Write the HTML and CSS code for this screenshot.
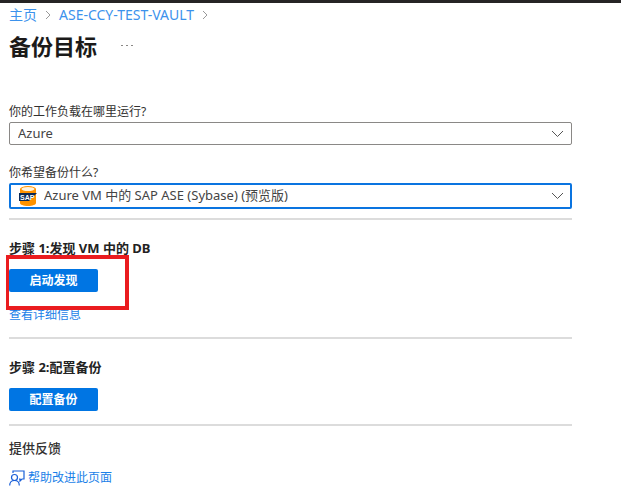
FILE: index.html
```
<!DOCTYPE html>
<html lang="zh-CN">
<head>
	<meta charset="UTF-8">
	<title>备份目标</title>
	<link rel="stylesheet" href="styles.css">
</head>
<body>
	<div class="topbar"></div>
	<div class="page">
		<nav class="crumbs">
			<a href="#">主页</a>
			<svg class="sep" viewBox="0 0 6 10"><path d="M1 1l4 4-4 4"/></svg>
			<a href="#">ASE-CCY-TEST-VAULT</a>
			<svg class="sep" viewBox="0 0 6 10"><path d="M1 1l4 4-4 4"/></svg>
		</nav>
		<header class="head">
			<h1>备份目标</h1>
			<button class="more" type="button" aria-label="更多">
				<svg viewBox="0 0 12 2"><path d="M0 0h2v1H0zM5 0h2v1H5zM10 0h2v1h-2z"/></svg>
			</button>
		</header>

		<div class="field">
			<label for="where">你的工作负载在哪里运行?</label>
			<div class="box">
				<select id="where"><option>Azure</option></select>
				<svg class="arrow" viewBox="0 0 13 8"><path d="M1 1l5.500 5.500L12 1"/></svg>
			</div>
		</div>
		<div class="field">
			<label for="what">你希望备份什么?</label>
			<div class="box current">
				<select id="what"><option>Azure VM 中的 SAP ASE (Sybase) (预览版)</option></select>
				<svg class="sap" viewBox="0 0 18 20">
					<path fill="#ff9300" d="M1 3v14c0 1.600 3.400 3 8 3s8-1.400 8-3V3z"/>
					<ellipse fill="#ff9300" cx="9" cy="3" rx="8" ry="3"/>
					<ellipse fill="#fff3dc" cx="9" cy="3" rx="6.500" ry="2"/>
					<path fill="#0b2a55" d="M0 7h18l-8 8H0z"/>
					<text x="1" y="14">SAP</text>
				</svg>
				<svg class="arrow" viewBox="0 0 13 8"><path d="M1 1l5.500 5.500L12 1"/></svg>
			</div>
		</div>

		<section class="step">
			<h2>步骤 1:发现 VM 中的 DB</h2>
			<div class="action">
				<button class="btn" type="button">启动发现</button>
				<span class="mark"></span>
			</div>
			<a class="detail" href="#">查看详细信息</a>
		</section>
		<section class="step">
			<h2>步骤 2:配置备份</h2>
			<button class="btn" type="button">配置备份</button>
		</section>
		<section class="feedback">
			<h3>提供反馈</h3>
			<a href="#">
				<svg class="person" viewBox="0 0 16 16"><path d="M4 3V1h11v8h-2l-2 2V9h-1"/><circle cx="5.500" cy="7.500" r="3"/><path d="M.7 15.500c0-3 2-5 4.800-5s4.800 2 4.800 5"/></svg>
				<span>帮助改进此页面</span>
			</a>
		</section>
	</div>
</body>
</html>
```
FILE: styles.css
```
* { margin: 0; padding: 0; box-sizing: border-box; }
body { background: #fff; color: #323130; font: 12px/18px "Noto Sans", "Noto Sans CJK SC", sans-serif; }
a { color: #1a7fe8; text-decoration: none; }
svg { display: block; fill: none; }
select, button { font: inherit; }

.topbar { height: 3px; background: #262425; }
.page { padding: 1px 49px 16px 9px; }

.crumbs { display: flex; align-items: center; gap: 8px; height: 21px; font-size: 14px; }
.crumbs a { color: #3c92ec; }
.sep { width: 6px; height: 10px; stroke: #999; }

.head { display: flex; align-items: center; gap: 24px; height: 42px; }
h1 { font-size: 22px; line-height: 32px; font-weight: 700; color: #1b1a19; }
.more { border: 0; background: none; }
.more svg { width: 12px; height: 2px; fill: #8a8886; }

.head + .field { margin-top: 36px; }
.field { margin-bottom: 19px; }
.field label { display: block; height: 19px; }
.box { position: relative; }
.box select { display: block; width: 100%; height: 23px; padding: 0 30px 1px 8px; border: 1px solid #8a8886; border-radius: 2px; background: #fff; color: #444; font-size: 13px; appearance: none; outline: 0; }
.box.current select { height: 26px; padding: 0 30px 2px 33px; border: 2px solid #0a74e0; }
.arrow { position: absolute; top: 50%; right: 8px; width: 13px; height: 8px; margin-top: -4px; stroke: #555; pointer-events: none; }
.sap { position: absolute; top: 3px; left: 10px; width: 18px; height: 20px; pointer-events: none; }
.sap text { fill: #fff; font: bold 7px "Liberation Sans", sans-serif; }

.field + .step { margin-top: -10px; }
.step { padding: 19px 0 13px; border-top: 2px solid #dcdcdc; }
h2 { margin-bottom: 12px; font-size: 13px; line-height: 18px; font-weight: 700; color: #222; }
.action { position: relative; }
.btn { display: block; width: 89px; height: 23px; border: 0; border-radius: 2px; background: #0075e3; color: #fff; font-weight: 700; cursor: pointer; }
/* highlight around the first action */
.mark { position: absolute; top: -14px; left: -3px; z-index: 1; width: 123px; height: 55px; border: 4px solid #ea1c1f; border-left-width: 3px; pointer-events: none; }
.detail { display: block; margin-top: 14px; }

.feedback { padding-top: 13px; border-top: 2px solid #dcdcdc; }
h3 { font-size: 13px; line-height: 18px; font-weight: 500; }
.feedback a { display: flex; align-items: center; gap: 3px; margin-top: 12px; }
.person { width: 16px; height: 16px; stroke: #1a5fd8; stroke-width: 1.2; }
```
